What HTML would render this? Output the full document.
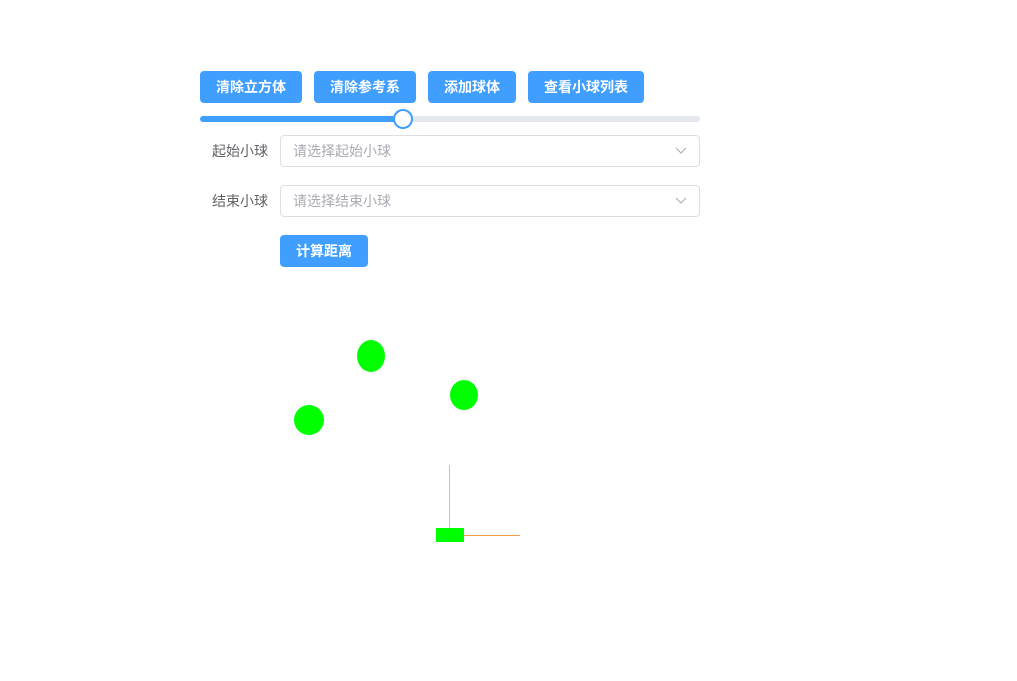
<!DOCTYPE html>
<html><head><meta charset="utf-8"><style>
body{margin:0;width:1017px;height:681px;background:#fff;font-family:"Liberation Sans","Noto Sans CJK SC",sans-serif;position:relative;overflow:hidden}
.btn{position:absolute;top:71px;height:32px;background:#409eff;color:#fff;border-radius:4px;font-size:14px;font-weight:bold;line-height:32px;text-align:center}
.lbl{position:absolute;left:200px;width:68px;text-align:right;font-size:14px;color:#606266;line-height:32px}
.sel{position:absolute;left:280px;height:30px;border:1px solid #dcdfe6;border-radius:4px;font-size:14px;color:#a8abb2;line-height:30px;padding-left:12px;box-sizing:content-box;width:406px}
.sel svg{position:absolute;right:12px;top:8px}
</style></head><body>
<div class="btn" style="left:200px;width:102px">清除立方体</div>
<div class="btn" style="left:314px;width:102px">清除参考系</div>
<div class="btn" style="left:428px;width:88px">添加球体</div>
<div class="btn" style="left:528px;width:116px">查看小球列表</div>
<div style="position:absolute;left:200px;top:116px;width:500px;height:6px;border-radius:3px;background:#e4e7ed"></div>
<div style="position:absolute;left:200px;top:116px;width:203px;height:6px;border-radius:3px;background:#409eff"></div>
<div style="position:absolute;left:393px;top:109px;width:16px;height:16px;border:2px solid #409eff;border-radius:50%;background:#fff"></div>
<div class="lbl" style="top:135px">起始小球</div>
<div class="sel" style="top:135px">请选择起始小球<svg width="12" height="12" viewBox="0 0 12 12"><path d="M1 4l5 5 5-5" fill="none" stroke="#a8abb2" stroke-width="1"/></svg></div>
<div class="lbl" style="top:185px">结束小球</div>
<div class="sel" style="top:185px">请选择结束小球<svg width="12" height="12" viewBox="0 0 12 12"><path d="M1 4l5 5 5-5" fill="none" stroke="#a8abb2" stroke-width="1"/></svg></div>
<div class="btn" style="left:280px;top:235px;width:88px">计算距离</div>
<svg style="position:absolute;left:0;top:0" width="1017" height="681">
<ellipse cx="371" cy="356" rx="14" ry="16" fill="#00ff00"/>
<ellipse cx="464" cy="395" rx="14" ry="15" fill="#00ff00"/>
<ellipse cx="309" cy="420" rx="15" ry="15" fill="#00ff00"/>
<line x1="449.5" y1="465" x2="449.5" y2="528" stroke="#b8d860" stroke-width="1"/>
<line x1="464" y1="535.5" x2="520" y2="535.5" stroke="#e8a040" stroke-width="1"/>
<rect x="436" y="528" width="28" height="14" fill="#00ff00"/>
</svg>
</body></html>
